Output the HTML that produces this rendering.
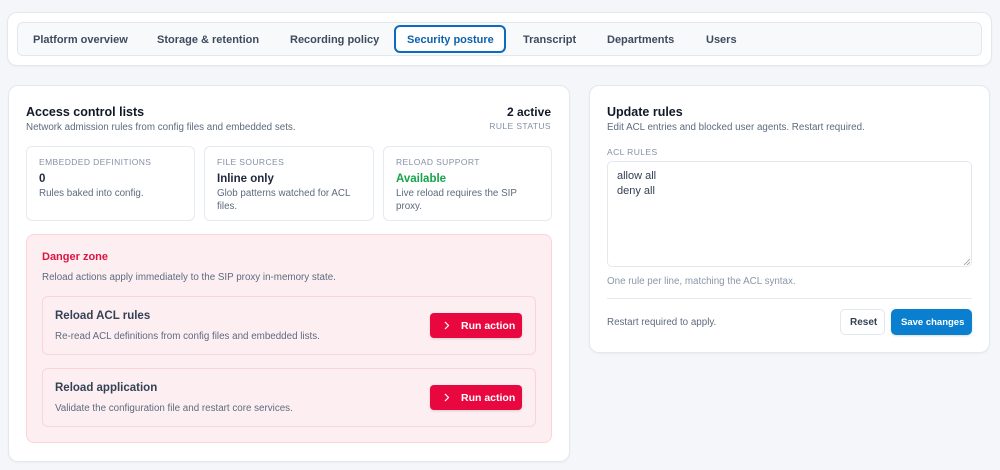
<!DOCTYPE html>
<html><head><style>
*{box-sizing:border-box;margin:0;padding:0}
body{width:1000px;height:470px;background:#f4f6f9;font-family:"Liberation Sans",sans-serif;color:#1e293b;position:relative;overflow:hidden}
.abs{position:absolute}
.card{position:absolute;background:#fff;border:1px solid #e3e8ef;border-radius:10px;box-shadow:0 1px 2px rgba(0,0,0,.04)}
.tab{position:absolute;top:33.5px;font-size:11px;font-weight:bold;color:#3f4b5d}
.t{position:absolute;white-space:nowrap}
.lbl{font-size:8.5px;letter-spacing:.4px;color:#8391a5}
.sub{font-size:9.8px;color:#5d6b7e}
.stat{position:absolute;top:146px;height:75px;border:1px solid #e5e9f0;border-radius:6px;background:#fff}
.btn{position:absolute;width:92px;height:25px;background:#e8073f;border-radius:4px;color:#fff;font-size:10.5px;font-weight:bold;box-shadow:0 1px 2px rgba(0,0,0,.15)}
</style></head><body>
<div class="card" style="left:7px;top:12px;width:985px;height:54px"></div>
<div class="abs" style="left:17px;top:22px;width:965px;height:34px;background:#f7f9fb;border:1px solid #e3e8ef;border-radius:6px"></div>
<div class="abs" style="left:394px;top:25px;width:112px;height:28px;border:2px solid #0b6bbf;border-radius:6px;background:#fff"></div>
<div class="tab" style="left:33px">Platform overview</div>
<div class="tab" style="left:157px">Storage &amp; retention</div>
<div class="tab" style="left:290px">Recording policy</div>
<div class="tab" style="left:407px;color:#0b62ad">Security posture</div>
<div class="tab" style="left:523px">Transcript</div>
<div class="tab" style="left:607px">Departments</div>
<div class="tab" style="left:706px">Users</div>

<div class="card" style="left:8px;top:85px;width:562px;height:377px"></div>
<div class="t" style="left:26px;top:105px;font-size:12.5px;font-weight:bold;color:#111827">Access control lists</div>
<div class="t sub" style="left:26px;top:122px">Network admission rules from config files and embedded sets.</div>
<div class="t" style="right:449px;top:105px;font-size:12px;font-weight:bold;color:#111827">2 active</div>
<div class="t lbl" style="right:449px;top:121px">RULE STATUS</div>

<div class="stat" style="left:26px;width:169px"></div>
<div class="stat" style="left:204px;width:170px"></div>
<div class="stat" style="left:383px;width:169px"></div>
<div class="t lbl" style="left:39px;top:157px">EMBEDDED DEFINITIONS</div>
<div class="t" style="left:39px;top:173px;font-size:11.5px;font-weight:bold">0</div>
<div class="t sub" style="left:39px;top:188px">Rules baked into config.</div>
<div class="t lbl" style="left:217px;top:157px">FILE SOURCES</div>
<div class="t" style="left:217px;top:173px;font-size:11.5px;font-weight:bold">Inline only</div>
<div class="t sub" style="left:217px;top:188px;line-height:12.5px">Glob patterns watched for ACL<br>files.</div>
<div class="t lbl" style="left:396px;top:157px">RELOAD SUPPORT</div>
<div class="t" style="left:396px;top:173px;font-size:11.5px;font-weight:bold;color:#16a34a">Available</div>
<div class="t sub" style="left:396px;top:188px;line-height:12.5px">Live reload requires the SIP<br>proxy.</div>

<div class="abs" style="left:26px;top:234px;width:526px;height:209px;background:#fdeff1;border:1px solid #fbd3da;border-radius:8px"></div>
<div class="t" style="left:42px;top:251px;font-size:11px;font-weight:bold;color:#dc1443">Danger zone</div>
<div class="t sub" style="left:42px;top:272px">Reload actions apply immediately to the SIP proxy in-memory state.</div>
<div class="abs" style="left:42px;top:296px;width:494px;height:59px;border:1px solid #fbd3da;border-radius:6px"></div>
<div class="abs" style="left:42px;top:368px;width:494px;height:59px;border:1px solid #fbd3da;border-radius:6px"></div>
<div class="t" style="left:55px;top:310px;font-size:11.5px;font-weight:bold;color:#334155">Reload ACL rules</div>
<div class="t sub" style="left:55px;top:331px">Re-read ACL definitions from config files and embedded lists.</div>
<div class="t" style="left:55px;top:382px;font-size:11.5px;font-weight:bold;color:#334155">Reload application</div>
<div class="t sub" style="left:55px;top:403px">Validate the configuration file and restart core services.</div>
<div class="btn" style="left:430px;top:313px"><svg class="abs" style="left:14px;top:8px" width="6" height="9"><path d="M1 1L4.5 4.5L1 8" stroke="#fff" stroke-width="1.2" fill="none"/></svg><span class="t" style="left:31px;top:6.5px">Run action</span></div>
<div class="btn" style="left:430px;top:385px"><svg class="abs" style="left:14px;top:8px" width="6" height="9"><path d="M1 1L4.5 4.5L1 8" stroke="#fff" stroke-width="1.2" fill="none"/></svg><span class="t" style="left:31px;top:6.5px">Run action</span></div>

<div class="card" style="left:589px;top:85px;width:401px;height:268px"></div>
<div class="t" style="left:607px;top:105px;font-size:12.5px;font-weight:bold;color:#111827">Update rules</div>
<div class="t sub" style="left:607px;top:122px">Edit ACL entries and blocked user agents. Restart required.</div>
<div class="t lbl" style="left:607px;top:147px">ACL RULES</div>
<div class="abs" style="left:607px;top:161px;width:365px;height:106px;border:1px solid #e3e8ef;border-radius:5px"></div>
<div class="t" style="left:617px;top:169px;font-size:11px;line-height:15px;color:#334155">allow all<br>deny all</div>
<svg class="abs" style="left:963px;top:258px" width="8" height="8"><path d="M1 7L7 1M4 7L7 4" stroke="#999" stroke-width="0.8"/></svg>
<div class="t" style="left:607px;top:276px;font-size:9.8px;color:#8a97aa">One rule per line, matching the ACL syntax.</div>
<div class="abs" style="left:607px;top:298px;width:365px;height:1px;background:#e6eaf0"></div>
<div class="t sub" style="left:607px;top:317px">Restart required to apply.</div>
<div class="abs" style="left:840px;top:309px;width:45px;height:26px;border:1px solid #e3e8ef;border-radius:5px;background:#fff"></div>
<div class="t" style="left:850px;top:317px;font-size:10px;font-weight:bold;color:#334155">Reset</div>
<div class="abs" style="left:891px;top:309px;width:81px;height:26px;background:#0b7fcf;border-radius:5px;box-shadow:0 1px 2px rgba(0,0,0,.15)"></div>
<div class="t" style="left:901px;top:317px;font-size:9.5px;font-weight:bold;color:#fff">Save changes</div>
</body></html>
